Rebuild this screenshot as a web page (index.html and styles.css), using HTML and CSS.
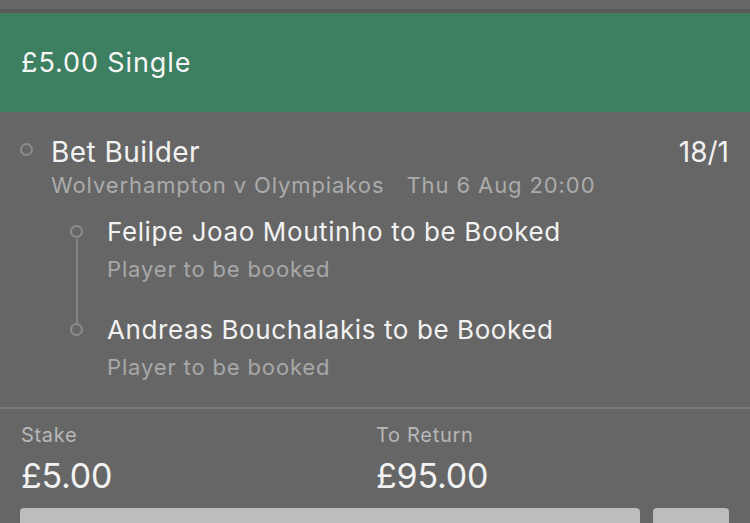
FILE: index.html
```html
<!DOCTYPE html>
<html lang="en">
<head>
<meta charset="utf-8">
<title>Bet Slip</title>
<link rel="stylesheet" href="styles.css">
</head>
<body>
<div class="slip">
  <div class="slip-top"></div>
  <header class="slip-header">£5.00 Single</header>

  <section class="bet">
    <div class="bet-head">
      <span class="dot dot-main"></span>
      <div class="bet-info">
        <div class="bet-title-row">
          <span class="bet-title">Bet Builder</span>
          <span class="bet-odds">18/1</span>
        </div>
        <div class="bet-meta">
          <span>Wolverhampton v Olympiakos</span>
          <span class="bet-time">Thu 6 Aug 20:00</span>
        </div>
      </div>
    </div>

    <ul class="legs">
      <li class="leg">
        <span class="dot dot-leg"></span>
        <div class="leg-name">Felipe Joao Moutinho to be Booked</div>
        <div class="leg-market">Player to be booked</div>
      </li>
      <li class="leg">
        <span class="dot dot-leg"></span>
        <div class="leg-name">Andreas Bouchalakis to be Booked</div>
        <div class="leg-market">Player to be booked</div>
      </li>
    </ul>
  </section>

  <footer class="totals">
    <div class="totals-grid">
      <div class="total">
        <div class="total-label">Stake</div>
        <div class="total-value">£5.00</div>
      </div>
      <div class="total">
        <div class="total-label">To Return</div>
        <div class="total-value">£95.00</div>
      </div>
    </div>
    <div class="actions">
      <button class="btn btn-wide" type="button"></button>
      <button class="btn btn-small" type="button"></button>
    </div>
  </footer>
</div>
</body>
</html>
```

FILE: styles.css
```css
html, body {
  margin: 0;
  padding: 0;
  background: #666666;
  overflow: hidden;
}

body {
  font-family: Inter, "Noto Sans", sans-serif;
  color: #f2f2f2;
  width: 750px;
  height: 523px;
}

.slip-top {
  height: 9px;
  background: #666666;
  border-bottom: 4px solid #595959;
}

.slip-header {
  height: 99px;
  background: #3d7f61;
  display: flex;
  align-items: center;
  padding-left: 21px;
  font-size: 27px;
  letter-spacing: 0.9px;
  color: #f6f6f6;
}

/* main selection */
.bet {
  padding: 23px 21px 0 20px;
  height: 295px;
  box-sizing: border-box;
}

.bet-head {
  display: flex;
  align-items: flex-start;
}

.dot {
  display: block;
  width: 9px;
  height: 9px;
  border: 2px solid #8c8c8c;
  border-radius: 50%;
  flex: none;
}

.dot-main {
  margin-top: 8px;
  margin-right: 18px;
}

.bet-info {
  flex: 1;
}

.bet-title-row {
  display: flex;
  justify-content: space-between;
  font-size: 28px;
  line-height: 34px;
  color: #f2f2f2;
}

.bet-title {
  letter-spacing: 0.45px;
}

.bet-meta {
  margin-top: 2px;
  font-size: 22px;
  line-height: 28px;
  letter-spacing: 0.9px;
  color: #ababab;
  display: flex;
  gap: 22px;
}

/* legs of the bet builder */
.legs {
  list-style: none;
  margin: 17px 0 0 0;
  padding: 0 0 0 87px;
  position: relative;
}

.legs::before {
  content: "";
  position: absolute;
  left: 56px;
  top: 23px;
  height: 85px;
  width: 2px;
  background: #858585;
}

.leg {
  position: relative;
}

.leg + .leg {
  margin-top: 31px;
}

.dot-leg {
  position: absolute;
  left: -37px;
  top: 9px;
}

.leg-name {
  font-size: 26px;
  line-height: 32px;
  letter-spacing: 0.6px;
  color: #f2f2f2;
}

.leg-market {
  margin-top: 7px;
  font-size: 22px;
  line-height: 28px;
  letter-spacing: 0.85px;
  color: #a8a8a8;
}

/* stake / return */
.totals {
  border-top: 2px solid #787878;
  padding: 14px 21px 0 20px;
}

.totals-grid {
  display: grid;
  grid-template-columns: 355px 1fr;
  padding-left: 1px;
}

.total-label {
  font-size: 20px;
  line-height: 24px;
  letter-spacing: 0.7px;
  color: #b8b8b8;
}

.total-value {
  margin-top: 9px;
  font-size: 34px;
  line-height: 40px;
  letter-spacing: -0.2px;
  color: #f2f2f2;
}

.actions {
  display: flex;
  gap: 13px;
  margin-top: 12px;
}

.btn {
  height: 40px;
  border: 0;
  border-radius: 4px;
  background: #bdbdbd;
  padding: 0;
}

.btn-wide {
  flex: 1;
}

.btn-small {
  width: 76px;
}
```
